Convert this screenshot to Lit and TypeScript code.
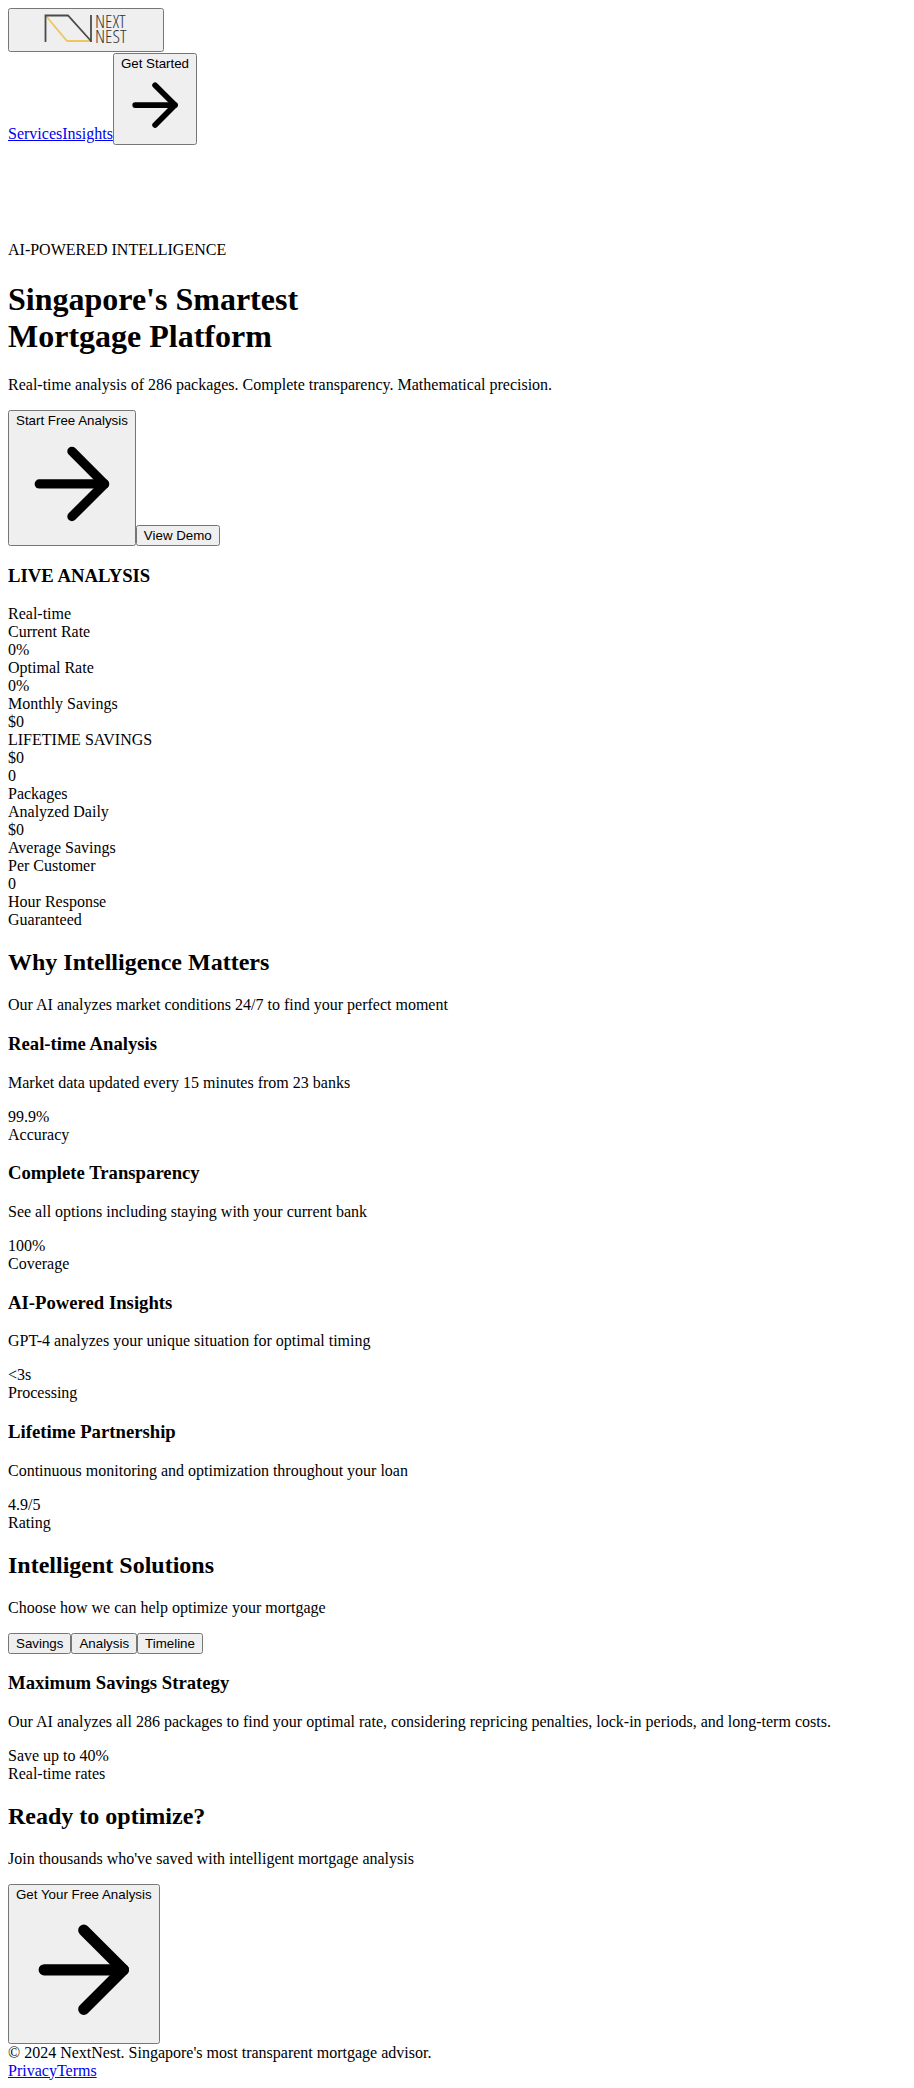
import { LitElement, html, css } from "lit";
import { customElement, state } from "lit/decorators.js";

@customElement("arrow-icon")
class ArrowIcon extends LitElement {
  /* Takes the width of the button's label without widening the button. */
  static styles = css`
    :host {
      display: inline-block;
      width: 0;
      min-width: 100%;
    }
    .arrow {
      width: 100%;
      fill: none;
      stroke: currentColor;
      stroke-width: 2;
      stroke-linecap: round;
      stroke-linejoin: round;
    }
  `;

  render() {
    return html`<svg class="arrow" viewBox="0 0 24 24" aria-hidden="true">
      <path d="M5 12h14"></path>
      <path d="m12 5 7 7-7 7"></path>
    </svg>`;
  }
}

@customElement("brand-logo")
class BrandLogo extends LitElement {
  static styles = css`
    .logo {
      display: block;
      width: 140px;
      height: 38px;
      overflow: visible;
    }
    .mark {
      fill: none;
      stroke-width: 1.8;
    }
    .dark {
      stroke: #4a4a4b;
    }
    .gold {
      stroke: #edc762;
    }
    .word {
      font-family: "Open Sans Condensed Light", "Noto Sans ExtraCondensed Light",
        "Roboto Condensed Light", "Open Sans Condensed", "Open Sans", sans-serif;
      font-size: 19px;
      font-weight: 300;
      fill: #333334;
    }
  `;

  render() {
    return html`<svg class="logo" viewBox="0 0 140 38" role="img" aria-label="NextNest">
      <path class="mark gold" d="M30 5 L51 30 H75"></path>
      <path class="mark dark" d="M29.500 31 V4.500 H52 L75 30"></path>
      <path class="mark dark" d="M75 4 V31"></path>
      <text class="word" x="79" y="17">NEXT</text>
      <text class="word" x="79" y="32">NEST</text>
    </svg>`;
  }
}

@customElement("app-root")
class AppRoot extends LitElement {
  static styles = css`
    :host {
      display: block;
      padding: 8px;
      font: 16px/18px "Liberation Serif", "Times New Roman", serif;
      color: #000;
      background: #fff;
    }
    h1 {
      font-size: 32px;
      line-height: 37px;
    }
    h2 {
      font-size: 24px;
      line-height: 27px;
    }
    h3 {
      line-height: 22px;
    }
    button {
      font-family: "Liberation Sans", Arial, sans-serif;
    }
    .hero {
      padding-top: 96px;
    }
  `;

  @state() private active = 0;

  private metrics = [
    ["Current Rate", "0%"],
    ["Optimal Rate", "0%"],
    ["Monthly Savings", "$0"],
    ["LIFETIME SAVINGS", "$0"],
  ];

  private stats = [
    ["0", "Packages", "Analyzed Daily"],
    ["$0", "Average Savings", "Per Customer"],
    ["0", "Hour Response", "Guaranteed"],
  ];

  private features = [
    ["Real-time Analysis", "Market data updated every 15 minutes from 23 banks", "99.9%", "Accuracy"],
    ["Complete Transparency", "See all options including staying with your current bank", "100%", "Coverage"],
    ["AI-Powered Insights", "GPT-4 analyzes your unique situation for optimal timing", "<3s", "Processing"],
    ["Lifetime Partnership", "Continuous monitoring and optimization throughout your loan", "4.9/5", "Rating"],
  ];

  private tabs = ["Savings", "Analysis", "Timeline"];

  render() {
    return html`
      <header>
        <div><button type="button"><brand-logo></brand-logo></button></div>
        <nav><a href="#services">Services</a><a href="#insights">Insights</a><button type="button">Get Started<arrow-icon></arrow-icon></button></nav>
      </header>
      <main>
        <section class="hero">
          <div>AI-POWERED INTELLIGENCE</div>
          <h1>Singapore's Smartest<br />Mortgage Platform</h1>
          <p>Real-time analysis of 286 packages. Complete transparency. Mathematical precision.</p>
          <div><button type="button">Start Free Analysis<arrow-icon></arrow-icon></button><button type="button">View Demo</button></div>
          <h3>LIVE ANALYSIS</h3>
          <div>Real-time</div>
          ${this.metrics.map(([label, value]) => html`<div>${label}</div><div>${value}</div>`)}
        </section>
        <section>
          ${this.stats.map((lines) => html`<div>${lines.map((line) => html`<div>${line}</div>`)}</div>`)}
        </section>
        <section id="insights">
          <h2>Why Intelligence Matters</h2>
          <p>Our AI analyzes market conditions 24/7 to find your perfect moment</p>
          ${this.features.map(
            ([title, text, value, label]) => html`<article>
              <h3>${title}</h3>
              <p>${text}</p>
              <div>${value}</div>
              <div>${label}</div>
            </article>`
          )}
        </section>
        <section id="services">
          <h2>Intelligent Solutions</h2>
          <p>Choose how we can help optimize your mortgage</p>
          <div>${this.tabs.map(
            (tab, i) => html`<button type="button" aria-pressed=${this.active === i} @click=${() => (this.active = i)}>${tab}</button>`
          )}</div>
          <h3>Maximum Savings Strategy</h3>
          <p>Our AI analyzes all 286 packages to find your optimal rate, considering repricing penalties, lock-in periods, and long-term costs.</p>
          <div>Save up to 40%</div>
          <div>Real-time rates</div>
        </section>
        <section>
          <h2>Ready to optimize?</h2>
          <p>Join thousands who've saved with intelligent mortgage analysis</p>
          <button type="button">Get Your Free Analysis<arrow-icon></arrow-icon></button>
        </section>
      </main>
      <footer>
        <div>© 2024 NextNest. Singapore's most transparent mortgage advisor.</div>
        <div><a href="#privacy">Privacy</a><a href="#terms">Terms</a></div>
      </footer>
    `;
  }
}
